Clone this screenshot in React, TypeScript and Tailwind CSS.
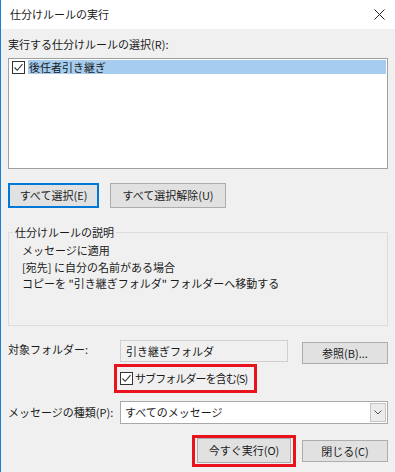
import React from "react";

const font = { fontFamily: '"Noto Sans CJK JP", "Noto Sans", sans-serif' };

function CheckBox() {
  return (
    <svg width="13" height="13" viewBox="0 0 13 13" className="shrink-0">
      <rect x="0.5" y="0.5" width="12" height="12" fill="#ffffff" stroke="#333333" />
      <path d="M2.5 6.5 L5.2 9.3 L10.5 3.2" fill="none" stroke="#333333" strokeWidth="1.1" />
    </svg>
  );
}

function Btn({
  children,
  className = "",
}: {
  children: React.ReactNode;
  className?: string;
}) {
  return (
    <div
      className={`flex items-center justify-center bg-[#e1e1e1] border border-[#adadad] text-[11px] text-[#1a1a1a] ${className}`}
    >
      {children}
    </div>
  );
}

export default function App() {
  return (
    <div
      className="w-[395px] h-[472px] bg-[#f0f0f0] border-l border-[#1a7fd4] text-[#1a1a1a] overflow-hidden flex flex-col"
      style={font}
    >
      {/* title bar */}
      <div className="h-[29px] bg-white flex items-center justify-between pl-[9px] pr-[10px] shrink-0">
        <span className="text-[11px]">仕分けルールの実行</span>
        <svg width="11" height="11" viewBox="0 0 11 11">
          <path d="M0.5 0.5 L10.5 10.5 M10.5 0.5 L0.5 10.5" stroke="#222" strokeWidth="1" />
        </svg>
      </div>

      <div className="pl-[7px] pr-[7px] flex flex-col">
        <div className="mt-[7px] h-[16px] leading-[16px] text-[11px]">
          実行する仕分けルールの選択(R):
        </div>

        {/* rule list */}
        <div className="mt-[6px] h-[111px] bg-white border border-[#a0a0a0] pt-[1px] pl-[3px] pr-[1px]">
          <div className="flex items-center h-[14px] gap-[3px]">
            <CheckBox />
            <div className="flex-1 h-[14px] bg-[#a6cdf0] leading-[14px] text-[11px] pl-[1px]">
              後任者引き継ぎ
            </div>
          </div>
        </div>

        {/* select buttons */}
        <div className="mt-[14px] flex gap-[11px] h-[25px]">
          <div className="w-[91px] h-[25px] flex items-center justify-center bg-[#e1e1e1] border-2 border-[#0078d7] text-[11px]">
            すべて選択(E)
          </div>
          <Btn className="w-[116px] h-[25px]">すべて選択解除(U)</Btn>
        </div>

        {/* description group */}
        <div className="relative mt-[24px] h-[94px] border border-[#dcdcdc] pt-[9px] pl-[13px] text-[11px] leading-[16.5px]">
          <span className="absolute -top-[9px] left-[4px] px-[2px] bg-[#f0f0f0] leading-[16px]">
            仕分けルールの説明
          </span>
          <div>メッセージに適用</div>
          <div>[宛先] に自分の名前がある場合</div>
          <div>コピーを "引き継ぎフォルダ" フォルダーへ移動する</div>
        </div>

        {/* target folder */}
        <div className="mt-[14px] flex h-[24px] text-[11px]">
          <div className="w-[112px] leading-[18px]">対象フォルダー:</div>
          <div className="w-[168px] h-[22px] border border-[#cfcfcf] bg-[#f0f0f0] pl-[5px] leading-[20px]">
            引き継ぎフォルダ
          </div>
          <Btn className="ml-[14px] mt-[2px] w-[86px] h-[22px]">参照(B)...</Btn>
        </div>

        {/* subfolder checkbox */}
        <div className="ml-[106px] w-[143px] h-[29px] border-[3px] border-[#e8131c] flex items-center pl-[3px] gap-[2px] text-[11px] whitespace-nowrap">
          <CheckBox />
          <span className="tracking-[-0.9px]">サブフォルダーを含む(S)</span>
        </div>

        {/* message type */}
        <div className="mt-[8px] flex h-[23px] text-[11px]">
          <div className="w-[112px] leading-[22px]">メッセージの種類(P):</div>
          <div className="flex-1 h-[23px] bg-white border border-[#a9a9a9] flex items-center pl-[4px] pr-[1px]">
            <span className="flex-1">すべてのメッセージ</span>
            <div className="w-[16px] h-[19px] bg-[#ececec] border border-[#c6c6c6] flex items-center justify-center">
              <svg width="8" height="5" viewBox="0 0 8 5">
                <path d="M0.5 0.5 L4 4 L7.5 0.5" fill="none" stroke="#555" strokeWidth="1" />
              </svg>
            </div>
          </div>
        </div>

        {/* bottom buttons */}
        <div className="mt-[11px] flex items-start">
          <div className="ml-[184px] w-[104px] h-[32px] border-[3px] border-[#e8131c] pl-[2px]">
            <Btn className="w-[94px] h-[25px]">今すぐ実行(O)</Btn>
          </div>
          <Btn className="ml-[6px] mt-[5px] w-[86px] h-[22px]">閉じる(C)</Btn>
        </div>
      </div>
    </div>
  );
}
